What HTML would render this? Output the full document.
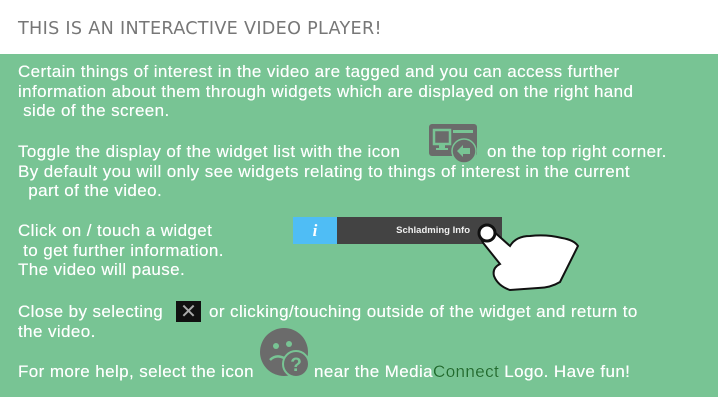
<!DOCTYPE html>
<html><head><meta charset="utf-8"><style>
body{margin:0;width:720px;height:400px;background:#fff;position:relative;overflow:hidden;font-family:"Liberation Sans",Arial,sans-serif}
.t{position:absolute;left:18px;top:19px;font-family:"DejaVu Sans",sans-serif;font-size:17.6px;color:#777;letter-spacing:0.3px}
.g{position:absolute;left:0;top:54px;width:718px;height:343px;background:#78c494}
.l{position:absolute;left:18px;color:#fff;font-size:17px;letter-spacing:0.4px;white-space:pre;line-height:19.5px;text-shadow:0 0 0.4px #fff}
.ab{position:absolute}
</style></head><body>
<div class="t">THIS IS AN INTERACTIVE VIDEO PLAYER!</div>
<div class="g"></div>
<div class="l" style="top:62px">Certain things of interest in the video are tagged and you can access further
information about them through widgets which are displayed on the right hand
 side of the screen.</div>
<div class="l" style="top:142px">Toggle the display of the widget list with the icon</div>
<div class="l" style="top:142px;left:487px">on the top right corner.</div>
<div class="l" style="top:161.5px">By default you will only see widgets relating to things of interest in the current
  part of the video.</div>
<div class="l" style="top:221px">Click on / touch a widget
 to get further information.
The video will pause.</div>
<div class="l" style="top:302px">Close by selecting</div>
<div class="l" style="top:302px;left:209px">or clicking/touching outside of the widget and return to</div>
<div class="l" style="top:321.5px">the video.</div>
<div class="l" style="top:362px">For more help, select the icon</div>
<div class="l" style="top:362px;left:314px">near the Media<span style="color:#1e6e2e">Connect</span> Logo. Have fun!</div>
<svg class="ab" style="left:428px;top:124px" width="50" height="40" viewBox="0 0 50 40">
<rect x="1" y="0" width="48" height="32" rx="3" fill="#6b6b6b"/>
<rect x="6" y="6" width="16" height="14" fill="none" stroke="#78c494" stroke-width="2.5"/>
<rect x="11" y="21" width="6" height="3" fill="#78c494"/><rect x="8" y="24" width="12" height="2" fill="#78c494"/>
<rect x="25" y="6" width="20" height="3" fill="#78c494"/>
<circle cx="36" cy="27" r="12" fill="#6b6b6b" stroke="#78c494" stroke-width="1.5"/>
<path d="M29 27 L35 21 L35 24 L42 24 L42 30 L35 30 L35 33 Z" fill="#78c494"/>
</svg>
<div class="ab" style="left:293px;top:217px;width:44px;height:27px;background:#4fbdf5;color:#fff;font:italic bold 17px 'Liberation Serif',serif;text-align:center;line-height:27px">i</div>
<div class="ab" style="left:337px;top:217px;width:165px;height:27px;background:#434343;color:#eee;font:bold 9.5px 'Liberation Sans',sans-serif;line-height:27px;text-align:right;box-sizing:border-box;padding-right:32px">Schladming Info</div>
<svg class="ab" style="left:474px;top:222px" width="110" height="75" viewBox="0 0 110 75">
<path d="M8 12 Q10 4 18 8 L36 24 Q42 14 56 14 Q72 12 88 16 Q100 18 104 24 L86 60 Q76 66 64 66 L36 68 Q24 64 20 54 Q18 46 26 42 L10 22 Q6 17 8 12 Z" fill="#fff" stroke="#111" stroke-width="2"/>
<circle cx="13" cy="11" r="8" fill="#fff" stroke="#111" stroke-width="3"/>
</svg>
<div class="ab" style="left:176px;top:301px;width:25px;height:21px;background:#111;color:#aaa;font:bold 20px 'DejaVu Sans',sans-serif;text-align:center;line-height:21px">✕</div>
<svg class="ab" style="left:260px;top:328px" width="52" height="50" viewBox="0 0 52 50">
<circle cx="24" cy="24" r="24" fill="#6b6b6b"/>
<circle cx="16" cy="18" r="3" fill="#78c494"/><circle cx="29" cy="16" r="3" fill="#78c494"/>
<path d="M10 32 Q16 26 24 30" stroke="#78c494" stroke-width="2.5" fill="none"/>
<circle cx="36" cy="36" r="13" fill="#6b6b6b" stroke="#78c494" stroke-width="2"/>
<text x="36" y="43" text-anchor="middle" font-family="Liberation Sans" font-weight="bold" font-size="19" fill="#78c494">?</text>
</svg>
</body></html>
